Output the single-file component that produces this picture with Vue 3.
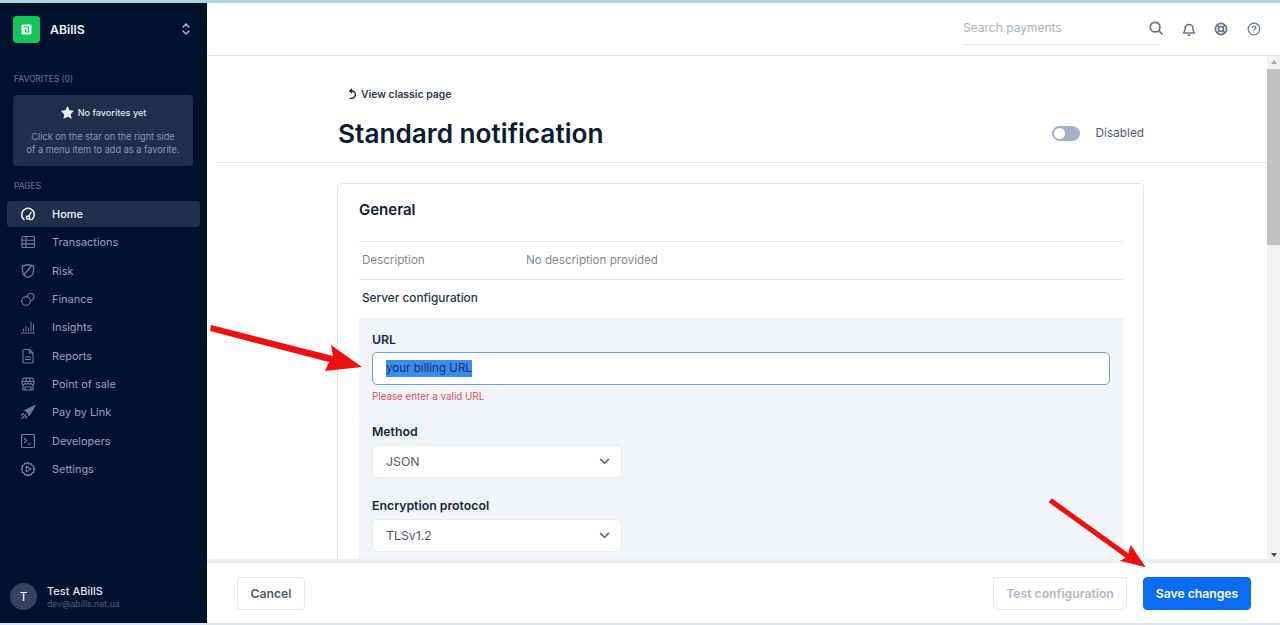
<script setup>
const nav = [
  { label: 'Home', icon: 'home', active: true },
  { label: 'Transactions', icon: 'table' },
  { label: 'Risk', icon: 'shield' },
  { label: 'Finance', icon: 'coins' },
  { label: 'Insights', icon: 'chart' },
  { label: 'Reports', icon: 'doc' },
  { label: 'Point of sale', icon: 'store' },
  { label: 'Pay by Link', icon: 'plane' },
  { label: 'Developers', icon: 'term' },
  { label: 'Settings', icon: 'gear' },
]
</script>

<template>
  <div class="shot">
    <div class="strip-top"></div>
    <div class="frame">
      <aside class="side">
        <div class="brand">
          <span class="logo">
            <svg width="11" height="11" viewBox="0 0 11 11"><rect x="0.500" y="0.500" width="10" height="10" rx="1.500" fill="#f4fbf6"/><path d="M2.500 3h5v5H4.500V5.500h1.200" fill="none" stroke="#14c45a" stroke-width="1.100"/></svg>
          </span>
          <span class="brand-name">ABillS</span>
          <svg class="updown" width="10" height="14" viewBox="0 0 10 14" fill="none" stroke="#aab4c5" stroke-width="1.500" stroke-linecap="round" stroke-linejoin="round"><path d="M2 5l3-3 3 3M2 9l3 3 3-3"/></svg>
        </div>
        <div class="sec-label fav-label">FAVORITES (0)</div>
        <div class="fav-box">
          <div class="fav-title">
            <svg width="15" height="15" viewBox="0 0 24 24" fill="#e8ebf1"><path d="M12 1.500l3.200 6.900 7.500.9-5.500 5.200 1.400 7.500L12 18.800l-6.600 3.700 1.400-7.500L1.300 9.300l7.500-.9z"/></svg>
            <span>No favorites yet</span>
          </div>
          <p class="fav-text">Click on the star on the right side<br>of a menu item to add as a favorite.</p>
        </div>
        <div class="sec-label pages-label">PAGES</div>
        <nav class="nav">
          <a v-for="n in nav" :key="n.label" class="nav-item" :class="{ active: n.active }">
            <svg class="nav-icon" width="16" height="16" viewBox="0 0 16 16" fill="none" stroke="currentColor" stroke-width="1.100" stroke-linecap="round" stroke-linejoin="round">
              <template v-if="n.icon === 'home'">
                <path stroke-width="1.600" d="M4 13.500A6.300 6.300 0 1 1 14.300 8c0 2.200-.8 4-2.300 5.500H9.800"/><circle cx="8" cy="11.500" r="1.600" stroke-width="1.500"/><path stroke-width="1.500" d="M9 10l2-3.500"/>
              </template>
              <template v-else-if="n.icon === 'table'">
                <rect x="2" y="2.500" width="12.500" height="11" rx="1.200"/><path d="M2 6.200h12.500M2 9.900h12.500M6 2.500v11"/>
              </template>
              <template v-else-if="n.icon === 'shield'">
                <path stroke-width="1.300" d="M8 1.500l5.500 1.500v5.200c0 3-2.300 5-5.500 6.300-3.200-1.300-5.500-3.300-5.500-6.300V3zM4.500 11l6.500-7.500"/>
              </template>
              <template v-else-if="n.icon === 'coins'">
                <circle cx="6" cy="10" r="4.300"/><path d="M7 5.800c.3-2 1.700-3.300 3.500-3.300a3.500 3.500 0 0 1 3.500 3.500c0 1.700-1.300 3-3.300 3.300"/>
              </template>
              <template v-else-if="n.icon === 'chart'">
                <path d="M1.500 14h13M3.500 12v-2M6 12V7.500M8.500 12V9M11 12V3M13.500 12V5.500" stroke-width="1"/>
              </template>
              <template v-else-if="n.icon === 'doc'">
                <path d="M3 3a1.500 1.500 0 0 1 1.500-1.500H9.500L13 5v8.500a1.500 1.500 0 0 1-1.500 1.500h-7A1.500 1.500 0 0 1 3 13.500zM9.500 1.500V5H13M5.500 9h5M5.500 11.500h5"/>
              </template>
              <template v-else-if="n.icon === 'store'">
                <path stroke-width="1.200" d="M3.500 2h9l1.500 3.500v1.500a1.500 1.500 0 0 1-3 0 1.600 1.600 0 0 1-3 0 1.600 1.600 0 0 1-3 0 1.500 1.500 0 0 1-3 0V5.500zM2 5.500h12M3 8.500v5.500h10V8.500M5 14v-3h6v3M6.200 2v3.500M9.800 2v3.500"/>
              </template>
              <template v-else-if="n.icon === 'plane'">
                <path fill="currentColor" stroke-width="1" d="M15 1.500L4.500 6.500l3 1.500 1.500 3.500z"/><path stroke-width="1.200" d="M3.500 9.500l-2 1.500M5.800 10.500l-3.800 3.800M7 12.500L5.500 14"/>
              </template>
              <template v-else-if="n.icon === 'term'">
                <rect x="1.500" y="1.500" width="13" height="13" rx="1.500" stroke-width="1.200"/><path stroke-width="1.200" d="M4.500 5.500l2 2-2 2M8 11h2.500"/>
              </template>
              <template v-else>
                <path stroke-width="1.300" d="M8 1.500l1.300 1.600 2-.4.700 1.900 1.900.7-.4 2L15 8l-1.500 1.300.4 2-1.900.7-.7 1.900-2-.4L8 15l-1.300-1.500-2 .4-.7-1.900-1.900-.7.4-2L1 8l1.500-1.300-.4-2 1.900-.7.7-1.900 2 .4z"/><path stroke-width="1.200" d="M6.300 5.200L11 8l-4.700 2.800z"/>
              </template>
            </svg>
            <span>{{ n.label }}</span>
          </a>
        </nav>
        <div class="user">
          <span class="avatar">T</span>
          <span class="user-meta">
            <span class="user-name">Test ABillS</span>
            <span class="user-mail">dev@abills.net.ua</span>
          </span>
        </div>
      </aside>

      <main class="main">
        <header class="top">
          <div class="search">
            <span>Search payments</span>
          </div>
          <svg class="t-search" width="14" height="14" viewBox="0 0 16 16" fill="none" stroke="#66758c" stroke-width="2" stroke-linecap="round"><circle cx="7" cy="7" r="5.500"/><path d="M11 11l3.800 3.800"/></svg>
          <svg class="t-bell" width="14" height="14" viewBox="0 0 14 14" fill="none" stroke="#66758c" stroke-width="1.600" stroke-linecap="round" stroke-linejoin="round"><path d="M1.500 11h11c-1-1-1.500-2-1.500-4.500a4 4 0 0 0-8 0C3 9 2.500 10 1.500 11zM6 13.200h2"/></svg>
          <svg class="t-help" width="14" height="14" viewBox="0 0 14 14" fill="none" stroke="#66758c" stroke-width="1.700"><circle cx="7" cy="7" r="5.600"/><circle cx="7" cy="7" r="2.500"/><path d="M3 3l2.200 2.200M11 3L8.800 5.200M3 11l2.200-2.200M11 11L8.800 8.800"/></svg>
          <svg class="t-q" width="14" height="14" viewBox="0 0 14 14" fill="none" stroke="#66758c" stroke-width="1.200" stroke-linecap="round"><circle cx="7" cy="7" r="5.800"/><path d="M5.400 5.500c.1-1 .8-1.500 1.700-1.500s1.600.6 1.600 1.400c0 1.200-1.700 1.300-1.700 2.500M7 10h.01"/></svg>
        </header>

        <div class="scroll-area">
          <div class="content">
            <div class="head">
              <a class="classic">
                <svg width="12" height="12" viewBox="0 0 12 12" fill="none" stroke="#1c2a3f" stroke-width="1.400" stroke-linecap="round" stroke-linejoin="round"><path d="M4.500 1.200L3 3h2.800a3.700 3.700 0 1 1-2.600 7.200"/><path d="M3 3l1.800 1.700"/></svg>
                <span>View classic page</span>
              </a>
              <div class="title-row">
                <h1>Standard notification</h1>
                <div class="toggle-wrap">
                  <span class="toggle"><i></i></span>
                  <span class="toggle-text">Disabled</span>
                </div>
              </div>
            </div>
            <section class="card">
              <h2>General</h2>
              <div class="desc-row">
                <span class="desc-key">Description</span>
                <span class="desc-val">No description provided</span>
              </div>
              <div class="srv">Server configuration</div>
              <div class="panel">
                <label class="f-label">URL</label>
                <div class="url-input"><span class="sel">your billing URL</span></div>
                <div class="err">Please enter a valid URL</div>
                <label class="f-label method">Method</label>
                <div class="select">
                  <span>JSON</span>
                  <svg width="11" height="7" viewBox="0 0 12 8" fill="none" stroke="#5b6a80" stroke-width="1.900" stroke-linecap="round" stroke-linejoin="round"><path d="M1.500 1.500L6 6l4.500-4.500"/></svg>
                </div>
                <label class="f-label enc">Encryption protocol</label>
                <div class="select">
                  <span>TLSv1.2</span>
                  <svg width="11" height="7" viewBox="0 0 12 8" fill="none" stroke="#5b6a80" stroke-width="1.900" stroke-linecap="round" stroke-linejoin="round"><path d="M1.500 1.500L6 6l4.500-4.500"/></svg>
                </div>
              </div>
            </section>
          </div>
          <div class="scrollbar">
            <span class="sb-up"></span>
            <span class="sb-thumb"></span>
            <span class="sb-down"></span>
          </div>
        </div>

        <footer class="foot">
          <button class="btn cancel">Cancel</button>
          <div class="foot-right">
            <button class="btn test">Test configuration</button>
            <button class="btn save">Save changes</button>
          </div>
        </footer>
      </main>
    </div>
    <div class="strip-bottom"></div>

    <svg class="arrows" width="1280" height="625" viewBox="0 0 1280 625">
      <path fill="#f00e0e" d="M211 325L333 356 331 345 362 367 325 371 329 362 210 331z"/>
      <path fill="#f00e0e" d="M1051.700 498.300L1128.300 553.300 1130.700 545 1145.700 567.300 1120 560.700 1125.700 557.700 1048.700 502.300z"/>
    </svg>
  </div>
</template>

<style>
html, body { margin: 0; padding: 0; background: #fff; }
</style>

<style scoped>
* { box-sizing: border-box; }
.shot {
  position: relative;
  width: 1280px;
  height: 625px;
  overflow: hidden;
  font-family: Inter, "Liberation Sans", sans-serif;
  background: #fff;
  display: flex;
  flex-direction: column;
}
.strip-top { height: 3px; background: #a9d9df; flex: none; }
.strip-bottom { height: 2px; background: #dbe6f3; flex: none; }
.frame { flex: 1; display: flex; min-height: 0; }

.side {
  width: 207px;
  flex: none;
  background: #01122e;
  display: flex;
  flex-direction: column;
  padding: 0 7px;
  position: relative;
}
.brand { display: flex; align-items: center; height: 27px; margin-top: 13px; padding-left: 6px; }
.logo { width: 27px; height: 27px; border-radius: 4px; background: #14c45a; display: flex; align-items: center; justify-content: center; flex: none; }
.brand-name { margin-left: 10px; color: #eef1f6; font-size: 12.300px; font-weight: 600; flex: 1; }
.updown { margin-right: 9px; margin-top: -1px; }
.sec-label { color: #5f6e87; font-size: 8.400px; font-weight: 500; padding-left: 7px; }
.fav-label { margin-top: 30px; line-height: 12px; }
.fav-box {
  margin: 10px 7px 0 6px;
  height: 71px;
  background: #1f2f4c;
  border-radius: 4px;
  text-align: center;
  padding-top: 8px;
}
.fav-title { display: flex; align-items: center; justify-content: center; gap: 3px; color: #e3e7ee; font-size: 9.100px; font-weight: 500; height: 18px; }
.fav-text { margin: 8.500px 0 0; color: #8c99ae; font-size: 9.200px; line-height: 13.500px; }
.pages-label { margin-top: 14px; line-height: 12px; }
.nav { margin-top: 9px; display: flex; flex-direction: column; gap: 2.330px; }
.nav-item {
  height: 26px;
  display: flex;
  align-items: center;
  gap: 16px;
  padding-left: 13px;
  border-radius: 4px;
  color: #93a1b7;
  font-size: 10.950px;
}
.nav-item.active { background: #1f2f4c; color: #f1f3f7; font-weight: 500; }
.nav-icon { flex: none; color: #6e7d96; }
.active .nav-icon { color: #eef1f6; }
.user { margin-top: auto; display: flex; align-items: center; gap: 10px; padding: 0 0 13px 3px; }
.avatar { width: 27px; height: 27px; border-radius: 50%; background: #36435c; color: #e9ecf2; display: flex; align-items: center; justify-content: center; font-size: 11.500px; font-weight: 500; flex: none; }
.user-meta { display: flex; flex-direction: column; margin-top: 1px; }
.user-name { color: #dfe4ec; font-size: 11px; font-weight: 500; line-height: 14px; }
.user-mail { color: #4f5d77; font-size: 8.700px; line-height: 12px; }

.main { flex: 1; min-width: 0; display: flex; flex-direction: column; }
.top {
  height: 53px;
  flex: none;
  border-bottom: 1px solid #e4e7ec;
  display: flex;
  align-items: center;
  padding-left: 756px;
}
.search {
  width: 197px;
  height: 32px;
  margin-top: -1px;
  border-bottom: 1px solid #e3e6eb;
  color: #a9b2c3;
  font-size: 12px;
  display: flex;
  align-items: center;
  padding-bottom: 1px;
}
.t-search { margin-left: -11px; margin-top: -2px; }
.t-bell { margin-left: 19px; margin-top: -1px; }
.t-help { margin-left: 18px; margin-top: -1px; }
.t-q { margin-left: 19px; margin-top: -1px; }

.scroll-area { flex: 1; min-height: 0; display: flex; overflow: hidden; border-bottom: 4px solid #eceef1; }
.content { flex: 1; min-width: 0; overflow: hidden; }
.head { height: 107px; margin-left: 9px; border-bottom: 1px solid #e6e8ec; padding: 31px 0 0 122px; }
.classic { display: flex; align-items: center; gap: 2px; color: #2c3a4f; font-size: 10.400px; font-weight: 600; height: 14px; margin-left: 9px; }
.title-row { display: flex; align-items: center; justify-content: space-between; margin-top: 15px; width: 806px; height: 34px; }
h1 { margin: 0; color: #0c1b33; font-size: 26.200px; font-weight: 600; }
.toggle-wrap { display: flex; align-items: center; gap: 16px; }
.toggle { width: 28px; height: 15px; background: #a5b1c5; border-radius: 8px; padding: 2px; display: block; }
.toggle i { display: block; width: 11px; height: 11px; background: #fff; border-radius: 50%; }
.toggle-text { color: #4f5c70; font-size: 11.800px; }
.card {
  margin: 20px 0 0 130px;
  width: 807px;
  height: 420px;
  border: 1px solid #e2e5ea;
  border-radius: 4px;
  padding: 0 20px 0 21px;
}
h2 { margin: 0; height: 58px; padding-top: 17px; color: #0f1e36; font-size: 15px; font-weight: 600; line-height: 18px; border-bottom: 1px solid #e3e6ea; }
.desc-row { height: 38px; display: flex; align-items: center; font-size: 11.600px; color: #7f8a9a; border-bottom: 1px solid #e3e6ea; padding: 0 0 2px 3px; }
.desc-key { width: 164px; }
.srv { height: 38px; display: flex; align-items: center; padding: 0 0 2px 3px; color: #233149; font-size: 11.800px; font-weight: 500; }
.panel { background: #f1f4f8; height: 300px; padding: 14px 13px 0; }
.f-label { display: block; color: #182840; font-size: 12.300px; font-weight: 600; line-height: 15px; }
.url-input {
  margin-top: 5px;
  height: 33px;
  background: #fff;
  border: 1px solid #6d9fe3;
  border-radius: 5px;
  padding-left: 13px;
  display: flex;
  align-items: center;
  color: #2f3a4c;
  font-size: 11.600px;
}
.sel { background: #3a8cf5; color: #1c3457; line-height: 17px; }
.err { margin-top: 6px; color: #d9525e; font-size: 9.800px; line-height: 12px; }
.method { margin-top: 21px; }
.enc { margin-top: 20px; }
.select {
  margin-top: 6px;
  width: 250px;
  height: 33px;
  background: #fff;
  border: 1px solid #e8ebef;
  border-radius: 5px;
  padding: 0 11px 0 13px;
  display: flex;
  align-items: center;
  justify-content: space-between;
  color: #4c586b;
  font-size: 12.300px;
}
.scrollbar { width: 13px; flex: none; background: #f1f1f1; display: flex; flex-direction: column; align-items: center; }
.sb-up { width: 0; height: 0; border: 3.500px solid transparent; border-top: 0; border-bottom: 4px solid #a3a3a3; margin-top: 4px; }
.sb-thumb { width: 13px; height: 176px; background: #c1c1c1; margin-top: 5px; }
.sb-down { width: 0; height: 0; border: 3.500px solid transparent; border-bottom: 0; border-top: 4px solid #505050; margin-top: auto; margin-bottom: 2px; }

.foot { height: 60px; flex: none; display: flex; align-items: center; justify-content: space-between; padding: 0 29px 0 30px; background: #fff; }
.foot-right { display: flex; gap: 16px; }
.btn { height: 33px; border-radius: 4px; font-family: inherit; font-size: 12.200px; font-weight: 600; border: 1px solid #e6e8ec; background: #fff; padding: 0; }
.cancel { width: 68px; color: #4d596c; }
.test { width: 134px; color: #b0b8c6; }
.save { width: 108px; color: #fff; background: #0a6cf5; border-color: #0a6cf5; }
.arrows { position: absolute; inset: 0; pointer-events: none; }
</style>
